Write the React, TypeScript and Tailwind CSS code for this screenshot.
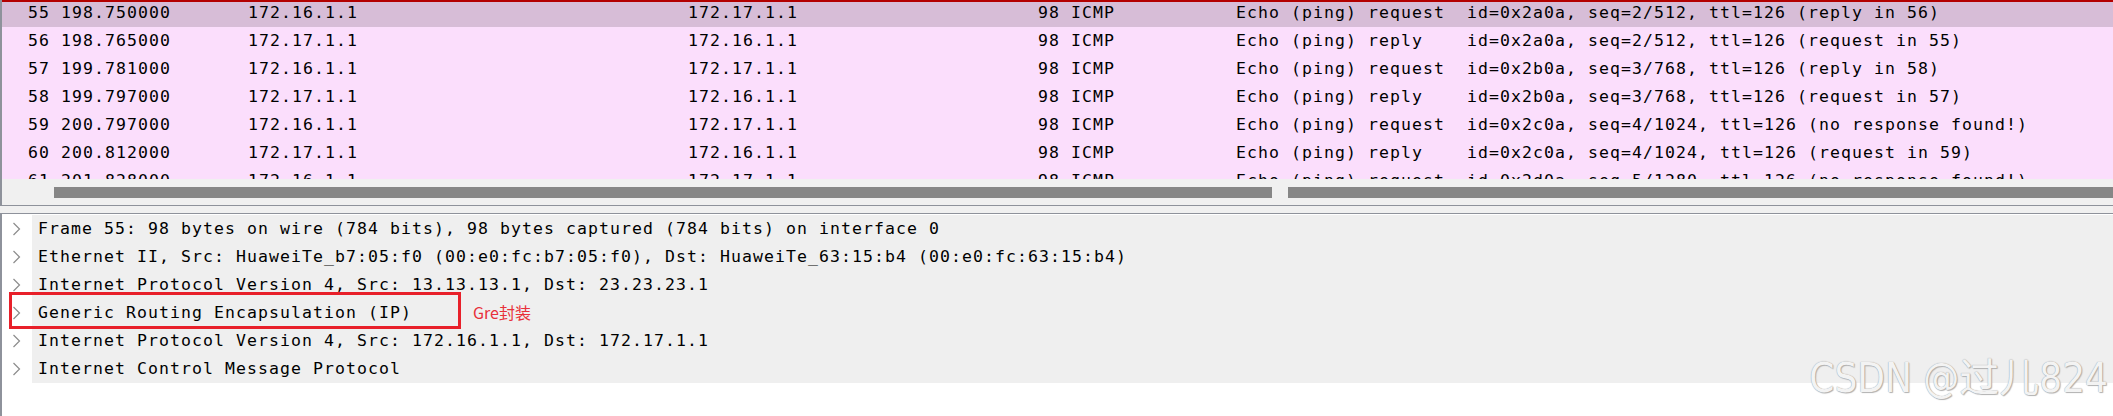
const PACKETS = [
  { no: "55", time: "198.750000", src: "172.16.1.1", dst: "172.17.1.1", info: "Echo (ping) request  id=0x2a0a, seq=2/512, ttl=126 (reply in 56)" },
  { no: "56", time: "198.765000", src: "172.17.1.1", dst: "172.16.1.1", info: "Echo (ping) reply    id=0x2a0a, seq=2/512, ttl=126 (request in 55)" },
  { no: "57", time: "199.781000", src: "172.16.1.1", dst: "172.17.1.1", info: "Echo (ping) request  id=0x2b0a, seq=3/768, ttl=126 (reply in 58)" },
  { no: "58", time: "199.797000", src: "172.17.1.1", dst: "172.16.1.1", info: "Echo (ping) reply    id=0x2b0a, seq=3/768, ttl=126 (request in 57)" },
  { no: "59", time: "200.797000", src: "172.16.1.1", dst: "172.17.1.1", info: "Echo (ping) request  id=0x2c0a, seq=4/1024, ttl=126 (no response found!)" },
  { no: "60", time: "200.812000", src: "172.17.1.1", dst: "172.16.1.1", info: "Echo (ping) reply    id=0x2c0a, seq=4/1024, ttl=126 (request in 59)" },
  { no: "61", time: "201.828000", src: "172.16.1.1", dst: "172.17.1.1", info: "Echo (ping) request  id=0x2d0a, seq=5/1280, ttl=126 (no response found!)" },
];

const TREE = [
  "Frame 55: 98 bytes on wire (784 bits), 98 bytes captured (784 bits) on interface 0",
  "Ethernet II, Src: HuaweiTe_b7:05:f0 (00:e0:fc:b7:05:f0), Dst: HuaweiTe_63:15:b4 (00:e0:fc:63:15:b4)",
  "Internet Protocol Version 4, Src: 13.13.13.1, Dst: 23.23.23.1",
  "Generic Routing Encapsulation (IP)",
  "Internet Protocol Version 4, Src: 172.16.1.1, Dst: 172.17.1.1",
  "Internet Control Message Protocol",
];

function Chevron() {
  return (
    <svg width="9" height="14" viewBox="0 0 9 14" className="block">
      <polyline points="1.5,1 7.5,7 1.5,13" fill="none" stroke="#8c8c8c" strokeWidth="1.2" />
    </svg>
  );
}

export default function App() {
  return (
    <div className="relative w-[2113px] h-[416px] overflow-hidden bg-white text-black font-['DejaVu_Sans_Mono',monospace] text-[16.5px] tracking-[1.065px] whitespace-pre">
      {/* packet list */}
      <div className="h-[206px] flex flex-col border-l-2 border-b border-[#8e929b]">
        <div className="relative h-[179px] overflow-hidden bg-[#fbdefc]">
          <div className="-mt-[0.6px]">
            {PACKETS.map((p, i) => (
              <div
                key={p.no}
                className={`grid grid-cols-[48px_198px_440px_312px_60px_176px_1fr] h-[27.9px] leading-[27.9px] ${
                  i === 0 ? "bg-[#d7bdd7]" : ""
                }`}
              >
                <span className="text-right">{p.no}</span>
                <span className="pl-[11px]">{p.time}</span>
                <span>{p.src}</span>
                <span>{p.dst}</span>
                <span className="text-right">98</span>
                <span className="pl-[11px]">ICMP</span>
                <span>{p.info}</span>
              </div>
            ))}
          </div>
          <div className="absolute top-0 left-0 right-0 h-[1.5px] bg-[#b30000]" />
        </div>
        <div className="h-[26px] bg-[#f0f0f0] flex pt-[8px] pl-[52px] gap-[16px]">
          <div className="w-[1218px] h-[11px] bg-[#868686]" />
          <div className="flex-1 h-[11px] bg-[#868686]" />
        </div>
      </div>

      <div className="h-[7px] bg-[#f0f0f0]" />

      {/* packet details */}
      <div className="h-[203px] border-t border-l-2 border-[#8e929b] pt-px">
        {TREE.map((t) => (
          <div key={t} className="flex h-[28px] leading-[28px]">
            <div className="w-[30px] flex items-center pl-[10px]">
              <Chevron />
            </div>
            <div className="flex-1 bg-[#efefef] pl-[6px]">{t}</div>
          </div>
        ))}
      </div>

      {/* annotation */}
      <div className="absolute left-[9px] top-[292px] w-[452px] h-[37px] border-[3px] border-[#e8202a]" />
      <div className="absolute left-[473px] top-[300px] leading-[24px] text-[16px] tracking-normal text-[#e8303a] font-['Noto_Sans_CJK_SC','Noto_Sans',sans-serif]">
        Gre封装
      </div>

      {/* watermark */}
      <div className="absolute right-[5px] top-[354px] text-[40px] leading-[48px] tracking-normal text-[#f3f3f3] font-['DejaVu_Sans_Condensed','Noto_Sans_CJK_SC',sans-serif] [text-shadow:0_0_1px_#8a8a8a,1px_1px_1px_#b5b5b5]">
        CSDN @过儿824
      </div>
    </div>
  );
}
